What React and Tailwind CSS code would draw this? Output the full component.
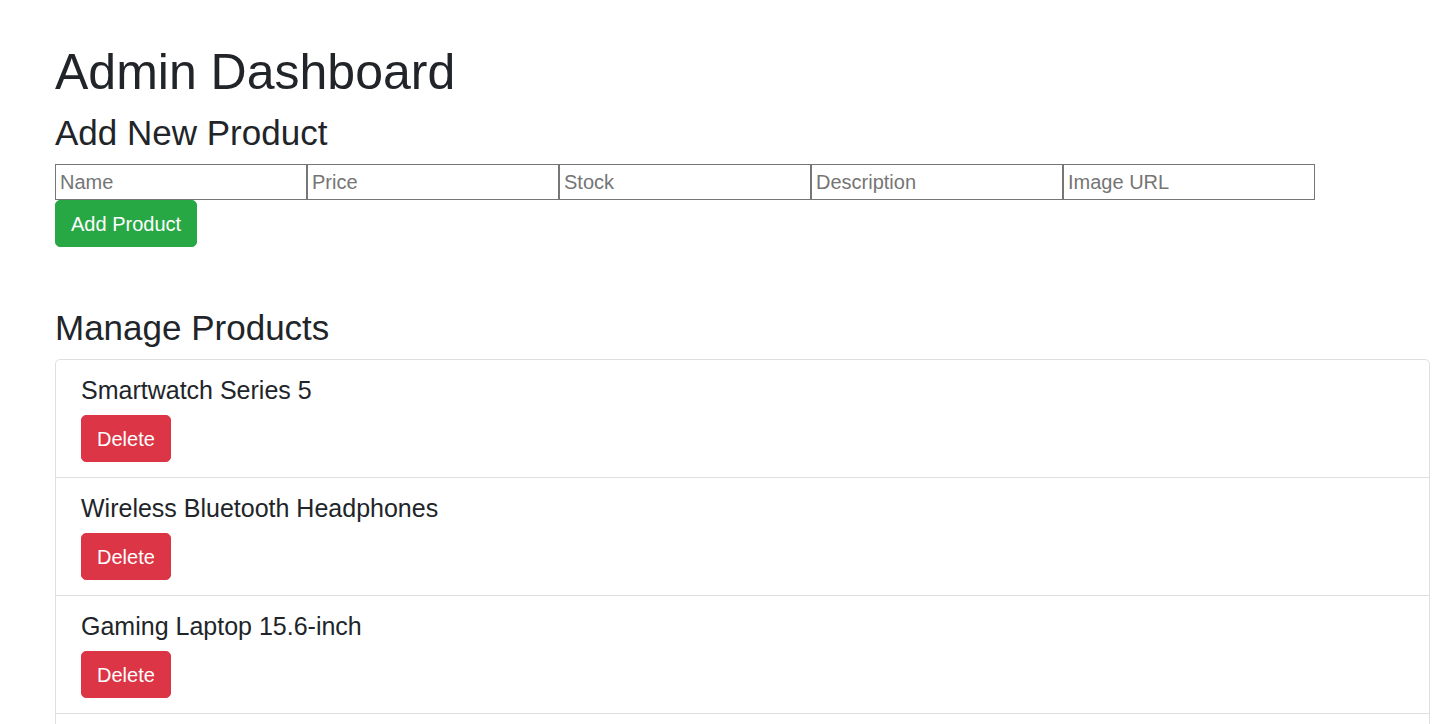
import React, { useState } from "react";

const initialProducts = [
    { id: 1, name: "Smartwatch Series 5" },
    { id: 2, name: "Wireless Bluetooth Headphones" },
    { id: 3, name: "Gaming Laptop 15.6-inch" },
    { id: 4, name: "4K Ultra HD Smart TV" },
];

const fields = [
    { key: "name", placeholder: "Name" },
    { key: "price", placeholder: "Price" },
    { key: "stock", placeholder: "Stock" },
    { key: "description", placeholder: "Description" },
    { key: "image", placeholder: "Image URL" },
];

const App = () => {
    const [products, setProducts] = useState(initialProducts);
    const [form, setForm] = useState({});

    const handleAdd = () => {
        if (!form.name) return;
        setProducts((prev) => [...prev, { id: Date.now(), name: form.name }]);
        setForm({});
    };

    const handleDelete = (id) => {
        setProducts((prev) => prev.filter((p) => p.id !== id));
    };

    return (
        <div className="min-h-screen bg-white text-[#212529] font-['Liberation_Sans',Arial,sans-serif] pl-[55px] pr-[17px] pt-[42px]">
            <h1 className="text-[50px] leading-[60px] mb-[10px]">Admin Dashboard</h1>

            {/* Add product form */}
            <h3 className="text-[35px] leading-[42px] mb-[10px]">Add New Product</h3>
            <div className="flex">
                {fields.map((f) => (
                    <input
                        key={f.key}
                        value={form[f.key] || ""}
                        onChange={(e) => setForm({ ...form, [f.key]: e.target.value })}
                        placeholder={f.placeholder}
                        className="w-[252px] h-[36px] border border-[#767676] pl-[4px] text-[20px] placeholder:text-[#757575] outline-none"
                    />
                ))}
            </div>
            <button
                onClick={handleAdd}
                className="bg-[#28a745] text-white text-[20px] leading-[30px] px-[15px] py-[7.5px] rounded-[5px] border border-[#28a745]"
            >
                Add Product
            </button>

            {/* Product list */}
            <h3 className="text-[35px] leading-[42px] mt-[60px] mb-[10px]">Manage Products</h3>
            <ul className="border border-[#dfdfdf] rounded-[5px]">
                {products.map((p, i) => (
                    <li
                        key={p.id}
                        className={`px-[25px] py-[15px] ${i > 0 ? "border-t border-[#dfdfdf]" : ""}`}
                    >
                        <h5 className="text-[25px] leading-[30px] mb-[10px]">{p.name}</h5>
                        <button
                            onClick={() => handleDelete(p.id)}
                            className="bg-[#dc3545] text-white text-[20px] leading-[30px] px-[15px] py-[7.5px] rounded-[5px] border border-[#dc3545]"
                        >
                            Delete
                        </button>
                    </li>
                ))}
            </ul>
        </div>
    );
};

export default App;
